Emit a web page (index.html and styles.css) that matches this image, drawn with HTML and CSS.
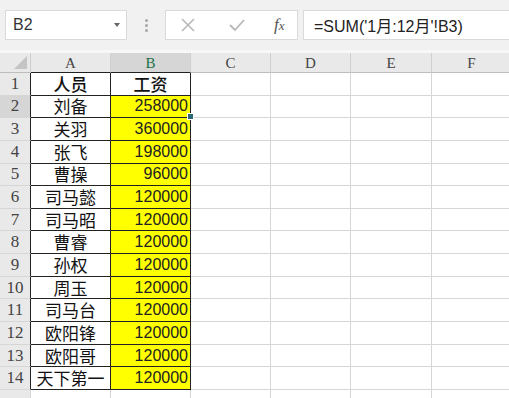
FILE: index.html
```html
<!DOCTYPE html>
<html lang="zh">
<head>
    <meta charset="UTF-8">
    <title>工资表</title>
    <link rel="stylesheet" href="styles.css">
</head>
<body>
    <div class="toolbar">
        <div class="namebox">
            <span>B2</span>
            <span class="arrow"></span>
        </div>
        <div class="dots"><i></i><i></i><i></i></div>
        <div class="fbuttons">
            <svg width="16" height="16" viewBox="0 0 16 16"><path d="M2 2 L14 14 M14 2 L2 14" stroke="#b8b8b8" stroke-width="1.6" fill="none"/></svg>
            <svg width="18" height="16" viewBox="0 0 18 16"><path d="M2 8 L7 13 L16 3" stroke="#b8b8b8" stroke-width="1.8" fill="none"/></svg>
            <span class="fx"><i>f</i><i>x</i></span>
        </div>
        <div class="formula">=SUM('1月:12月'!B3)</div>
    </div>

    <div class="gap"></div>

    <div class="sheet-wrap">
    <table class="sheet">
        <colgroup>
            <col style="width:31px">
            <col style="width:80px">
            <col style="width:80px">
            <col style="width:80px">
            <col style="width:80px">
            <col style="width:81px">
            <col style="width:80px">
        </colgroup>
        <tr class="head">
            <th class="corner"><span class="tri"></span></th>
            <th class="boxed-bottom">A</th>
            <th class="boxed-bottom active">B</th>
            <th>C</th>
            <th>D</th>
            <th>E</th>
            <th>F</th>
        </tr>
        <tr><th class="rh">1</th><td class="name bold">人员</td><td class="title">工资</td><td></td><td></td><td></td><td></td></tr>
        <tr><th class="rh active">2</th><td class="name">刘备</td><td class="num sel">258000<span class="handle"></span></td><td></td><td></td><td></td><td></td></tr>
        <tr><th class="rh">3</th><td class="name">关羽</td><td class="num">360000</td><td></td><td></td><td></td><td></td></tr>
        <tr><th class="rh">4</th><td class="name">张飞</td><td class="num">198000</td><td></td><td></td><td></td><td></td></tr>
        <tr><th class="rh">5</th><td class="name">曹操</td><td class="num">96000</td><td></td><td></td><td></td><td></td></tr>
        <tr><th class="rh">6</th><td class="name">司马懿</td><td class="num">120000</td><td></td><td></td><td></td><td></td></tr>
        <tr><th class="rh">7</th><td class="name">司马昭</td><td class="num">120000</td><td></td><td></td><td></td><td></td></tr>
        <tr><th class="rh">8</th><td class="name">曹睿</td><td class="num">120000</td><td></td><td></td><td></td><td></td></tr>
        <tr><th class="rh">9</th><td class="name">孙权</td><td class="num">120000</td><td></td><td></td><td></td><td></td></tr>
        <tr><th class="rh">10</th><td class="name">周玉</td><td class="num">120000</td><td></td><td></td><td></td><td></td></tr>
        <tr><th class="rh">11</th><td class="name">司马台</td><td class="num">120000</td><td></td><td></td><td></td><td></td></tr>
        <tr><th class="rh">12</th><td class="name">欧阳锋</td><td class="num">120000</td><td></td><td></td><td></td><td></td></tr>
        <tr><th class="rh">13</th><td class="name">欧阳哥</td><td class="num">120000</td><td></td><td></td><td></td><td></td></tr>
        <tr><th class="rh">14</th><td class="name">天下第一</td><td class="num">120000</td><td></td><td></td><td></td><td></td></tr>
        <tr><th></th><td></td><td></td><td></td><td></td><td></td><td></td></tr>
    </table>
    </div>
</body>
</html>
```

FILE: styles.css
```css
body {
    margin: 0;
    width: 509px;
    height: 398px;
    overflow: hidden;
    background: #fff;
    font-family: "Liberation Sans", "Noto Sans CJK SC", sans-serif;
}
.toolbar {
    height: 50px;
    background: #f1f1f1;
    display: flex;
    align-items: center;
    padding-left: 5px;
    box-sizing: border-box;
}
.namebox {
    width: 122px;
    height: 30px;
    box-sizing: border-box;
    background: #fff;
    border: 1px solid #dadada;
    display: flex;
    align-items: center;
    justify-content: space-between;
    padding: 0 6px 0 7px;
    font-size: 16px;
    color: #333;
}
.arrow {
    width: 0;
    height: 0;
    border-left: 3px solid transparent;
    border-right: 3px solid transparent;
    border-top: 4px solid #666;
}
.dots {
    width: 38px;
    display: flex;
    flex-direction: column;
    align-items: center;
    gap: 2px;
}
.dots i {
    width: 3px;
    height: 3px;
    border-radius: 50%;
    background: #a8a8a8;
}
.fbuttons {
    width: 133px;
    height: 30px;
    box-sizing: border-box;
    background: #fff;
    border: 1px solid #dadada;
    display: flex;
    align-items: center;
    padding-left: 14px;
    gap: 32px;
}
.fx {
    font-family: "Liberation Serif", serif;
    font-size: 17px;
    color: #555;
    margin-left: -4px;
}
.fx i:last-child {
    font-size: 13px;
}
.formula {
    margin-left: 5px;
    flex: 1;
    height: 30px;
    box-sizing: border-box;
    background: #fff;
    border: 1px solid #dadada;
    border-right: none;
    display: flex;
    align-items: center;
    padding-left: 10px;
    font-size: 16px;
    color: #222;
    white-space: nowrap;
}
.gap {
    height: 3px;
    background: #f7f7f7;
}
.sheet-wrap {
    position: relative;
}
.sheet {
    table-layout: fixed;
    border-collapse: separate;
    border-spacing: 0;
    width: 512px;
}
.sheet th, .sheet td {
    padding: 0;
    border-right: 1px solid #d6d6d6;
    border-bottom: 1px solid #d6d6d6;
    height: 22.65px;
    line-height: 20px;
    box-sizing: border-box;
    font-weight: normal;
    white-space: nowrap;
}
.sheet tr.head th {
    height: 20px;
    line-height: 18px;
    background: #e9e9e9;
    font-family: "Liberation Serif", serif;
    font-size: 15px;
    color: #444;
    border-right-color: #cfcfcf;
    border-bottom-color: #bdbdbd;
}
.sheet th {
    background: #e9e9e9;
    font-family: "Liberation Serif", serif;
    font-size: 17px;
    color: #444;
    text-align: center;
}
.sheet tr.head th.boxed-bottom {
    border-bottom-color: #222;
}
.sheet tr.head th.active {
    background: #d6d6d6;
    color: #217346;
}
.sheet th.rh {
    border-right-color: #222;
}
.sheet th.rh.active {
    background: #d6d6d6;
}
.corner {
    position: relative;
}
.tri {
    position: absolute;
    right: 3px;
    bottom: 3px;
    width: 0;
    height: 0;
    border-left: 13px solid transparent;
    border-bottom: 13px solid #c4c4c4;
}
.name, .title, .num {
    font-family: "Noto Sans CJK SC", sans-serif;
    font-size: 17px;
    color: #111;
    border-right-color: #222 !important;
    border-bottom-color: #222 !important;
}
.name, .title {
    text-align: center;
}
.bold, .title {
    font-weight: 500 !important;
}
.num {
    font-family: "Liberation Sans", sans-serif;
    font-size: 16px;
    background: #ffff00;
    text-align: right;
    padding-right: 2px !important;
    color: #222;
}
.sel {
    position: relative;
}
.handle {
    position: absolute;
    right: -4px;
    bottom: -3px;
    width: 5px;
    height: 5px;
    background: #2b6a73;
    border: 1px solid #fff;
}
```
